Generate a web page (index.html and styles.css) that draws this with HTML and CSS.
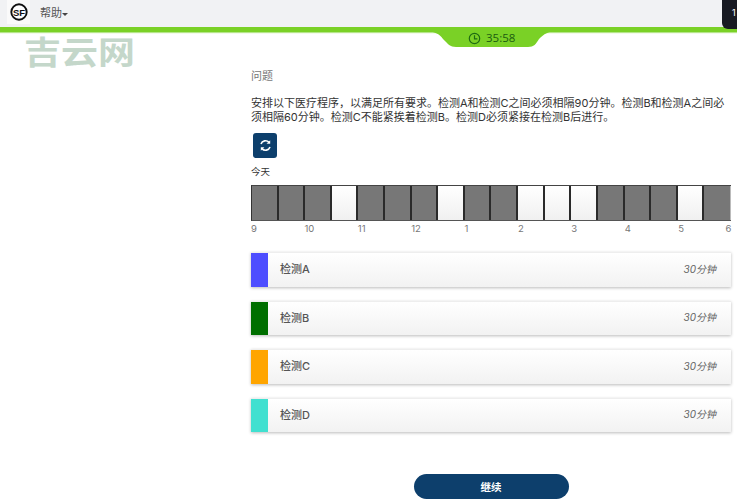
FILE: index.html
```html
<!DOCTYPE html>
<html lang="zh">
<head>
<meta charset="utf-8">
<title>检测</title>
<link rel="stylesheet" href="styles.css">
</head>
<body>
<header class="topbar">
  <div class="logo">
    <svg width="18" height="18" viewBox="0 0 18 18"><circle cx="9" cy="9" r="7.7" fill="#fff" stroke="#111" stroke-width="1.9"/><text x="9" y="12.6" class="logo-text">SF</text></svg>
  </div>
  <div class="help">帮助<span class="caret"></span></div>
  <div class="chip">1</div>
  <div class="timer">
    <svg class="timer-shape" width="136" height="17" viewBox="0 0 136 17"><path d="M0 0H134C124 0 120 3 115 8C112 13 110 16 104 16H32C26 16 24 13 19 8C16 3 10 0 0 0Z" fill="#7ad126"/></svg>
    <div class="timer-content">
      <svg width="13" height="13" viewBox="0 0 13 13" fill="none" stroke="#1f6b12" stroke-width="1.2"><circle cx="6.5" cy="6.5" r="5.2"/><path d="M6.5 3.3V6.8H9.4"/></svg>
      <span>35:58</span>
    </div>
  </div>
</header>
<div class="watermark">吉云网</div>
<main class="main">
  <div class="label">问题</div>
  <p class="question">安排以下医疗程序，以满足所有要求。检测A和检测C之间必须相隔90分钟。检测B和检测A之间必须相隔60分钟。检测C不能紧挨着检测B。检测D必须紧接在检测B后进行。</p>
  <button class="refresh" aria-label="刷新">
    <svg width="13" height="13" viewBox="0 0 13 13" fill="none" stroke="#fff" stroke-width="1.6"><path d="M2 5A4.7 4.7 0 0 1 10 3.4"/><path d="M11 8A4.7 4.7 0 0 1 3 9.6"/><path d="M11.2 1.2V4.8H7.6Z" fill="#fff" stroke="none"/><path d="M1.8 11.8V8.2H5.4Z" fill="#fff" stroke="none"/></svg>
  </button>
  <div class="today">今天</div>
  <div class="timeline">
    <div class="cell busy"></div><div class="cell busy"></div><div class="cell busy"></div><div class="cell free"></div>
    <div class="cell busy"></div><div class="cell busy"></div><div class="cell busy"></div><div class="cell free"></div>
    <div class="cell busy"></div><div class="cell busy"></div><div class="cell free"></div><div class="cell free"></div>
    <div class="cell free"></div><div class="cell busy"></div><div class="cell busy"></div><div class="cell busy"></div>
    <div class="cell free"></div><div class="cell busy"></div>
  </div>
  <div class="hours">
    <span>9</span><span>10</span><span>11</span><span>12</span><span>1</span><span>2</span><span>3</span><span>4</span><span>5</span><span>6</span>
  </div>
  <div class="tests">
    <div class="test"><div class="swatch swatch-a"></div><div class="test-name">检测A</div><div class="test-time">30分钟</div></div>
    <div class="test"><div class="swatch swatch-b"></div><div class="test-name">检测B</div><div class="test-time">30分钟</div></div>
    <div class="test"><div class="swatch swatch-c"></div><div class="test-name">检测C</div><div class="test-time">30分钟</div></div>
    <div class="test"><div class="swatch swatch-d"></div><div class="test-name">检测D</div><div class="test-time">30分钟</div></div>
  </div>
  <div class="actions"><button class="continue">继续</button></div>
</main>
</body>
</html>
```
FILE: styles.css
```css
* { box-sizing: border-box; }
html, body { margin: 0; padding: 0; }
body {
  width: 737px;
  height: 500px;
  overflow: hidden;
  background: #fff;
  color: #333;
  font-family: "Inter", "Noto Sans CJK SC", sans-serif;
  font-size: 11px;
}
.topbar {
  position: relative;
  height: 32px;
  display: flex;
  align-items: flex-start;
  background: #f1f2f4;
  border-bottom: 5px solid #7ad126;
  box-shadow: 0 1px 1px #b6e58a;
}
.logo {
  width: 23px;
  height: 24px;
  margin-left: 7px;
  display: flex;
  align-items: center;
  justify-content: center;
  background: #fafafa;
}
.logo-text {
  font-family: "Liberation Sans", sans-serif;
  font-size: 9.5px;
  font-weight: 700;
  text-anchor: middle;
  fill: #111;
}
.help {
  margin-left: 10px;
  line-height: 26px;
  font-size: 11px;
  color: #555;
  display: flex;
  align-items: center;
}
.caret {
  width: 0;
  height: 0;
  margin-top: 2px;
  border-left: 3px solid transparent;
  border-right: 3px solid transparent;
  border-top: 3px solid #444;
}
.chip {
  position: absolute;
  top: 0;
  right: 0;
  width: 15px;
  height: 29px;
  padding: 6px 0 0 10px;
  background: #181a22;
  border-radius: 0 0 0 6px;
  color: #fff;
  font-size: 9px;
  line-height: 14px;
}
.timer {
  position: absolute;
  top: 31px;
  left: 424px;
  width: 136px;
  height: 17px;
}
.timer-shape { display: block; }
.timer-content {
  position: absolute;
  top: 0;
  left: 44px;
  display: flex;
  align-items: center;
  gap: 5px;
  font-family: "Open Sans", sans-serif;
  font-size: 11.5px;
  line-height: 14px;
  color: #1a5c10;
}
.watermark {
  position: absolute;
  top: 32px;
  left: 24px;
  font-family: "Noto Sans CJK SC", sans-serif;
  font-size: 37px;
  font-weight: 700;
  line-height: 44px;
  color: #c4d7ca;
  transform: scaleY(0.85);
  transform-origin: top left;
}
.main {
  width: 480px;
  margin-left: 251px;
  padding-top: 37px;
}
.label {
  font-size: 11px;
  line-height: 14px;
  color: #777;
}
.question {
  margin: 13px 0 0;
  line-height: 14px;
  font-size: 11px;
  color: #333;
}
.refresh {
  display: flex;
  align-items: center;
  justify-content: center;
  width: 24px;
  height: 25px;
  margin: 9px 0 0 2px;
  padding: 0;
  border: 0;
  border-radius: 3px;
  background: #0d3f6c;
}
.today {
  margin-top: 8px;
  font-size: 9.5px;
  line-height: 12px;
  color: #333;
}
.timeline {
  display: grid;
  grid-template-columns: repeat(18, 1fr);
  height: 36px;
  margin-top: 7px;
  border-left: 1px solid #333;
  border-top: 1px solid #444;
  border-bottom: 1px solid #555;
}
.cell { border-right: 2px solid #2a2a2a; }
.cell:last-child { border-right: 1px solid #bbb; }
.busy { background: #777; }
.free { background: linear-gradient(#fff, #f0f0f0); }
.hours {
  display: flex;
  margin-top: 1px;
  font-size: 9.5px;
  line-height: 13px;
  color: #777;
}
.hours span { flex: none; width: 53.4px; }
.hours span:last-child { width: auto; margin-left: -6px; }
.tests {
  display: flex;
  flex-direction: column;
  gap: 14px;
  margin-top: 17px;
}
.test {
  display: flex;
  align-items: center;
  height: 34.5px;
  background: linear-gradient(#fff, #f2f2f2);
  border-top: 1px solid #eee;
  box-shadow: 0 1px 3px #bbb;
}
.swatch { width: 17px; height: 100%; }
.swatch-a { background: #4d4dff; }
.swatch-b { background: #006f00; }
.swatch-c { background: #ffa500; }
.swatch-d { background: #40e0d0; }
.test-name {
  flex: 1;
  margin-left: 12px;
  padding-bottom: 3px;
  font-size: 11px;
  font-weight: 500;
  color: #555;
}
.test-time {
  margin-right: 15px;
  padding-bottom: 3px;
  font-size: 10px;
  font-style: italic;
  color: #666;
}
.actions {
  display: flex;
  justify-content: center;
  margin-top: 42px;
}
.continue {
  width: 155px;
  height: 25px;
  padding: 0;
  border: 0;
  border-radius: 13px;
  background: #0d3f6c;
  color: #fff;
  font-family: "Noto Sans CJK SC", sans-serif;
  font-size: 10.5px;
  font-weight: 700;
}
```
